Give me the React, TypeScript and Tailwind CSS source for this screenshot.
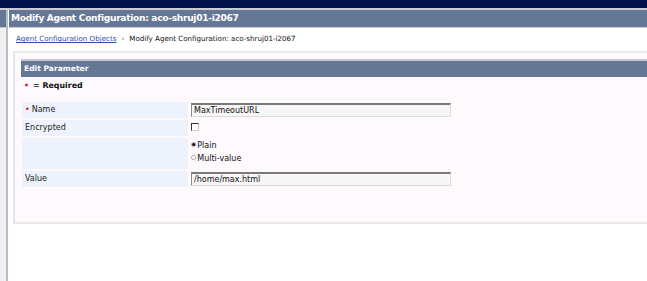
import React from "react";

const font = { fontFamily: '"DejaVu Sans", Verdana, sans-serif' };

function Row({ label, required, children, tall }: { label?: string; required?: boolean; children: React.ReactNode; tall?: boolean }) {
  return (
    <div className={`flex gap-[2px] ${tall ? "h-[31px]" : "h-[16px]"}`}>
      <div className="w-[166px] bg-[#eef2fc] flex items-center pl-[3px] text-[8px] text-[#222]">
        {required && <span className="text-[#e01010] mr-[2px] text-[8px]">•</span>}
        {label}
      </div>
      <div className="flex-1 pl-[1px]">{children}</div>
    </div>
  );
}

function TextInput({ value }: { value: string }) {
  return (
    <div className="mt-[1px] w-[260px] h-[14px] bg-[#f7f7f7] border-t-2 border-l border-t-[#7a7a7a] border-l-[#8a8a8a] border-r border-b border-r-[#dcdcd8] border-b-[#dcdcd8] text-[8px] leading-[11px] pl-[2px] text-[#111]">
      {value}
    </div>
  );
}

export default function App() {
  return (
    <div className="w-[647px] h-[281px] bg-white overflow-hidden relative" style={font}>
      <div className="h-[8px] bg-[#00134a]" />
      <div className="h-[2px] bg-[#c9ccd6]" />
      <div className="flex h-[271px]">
        <div className="w-[6px] flex flex-col bg-[#f1f1f3]">
          <div className="h-[17px] bg-[#647896]" />
          <div className="h-[1px] bg-[#c0c4cc]" />
        </div>
        <div className="w-[2px] bg-[#b8bcc4]" />
        <div className="w-[1px] bg-white" />
        <div className="flex-1 flex flex-col">
          <div className="h-[17px] bg-[#647896] text-white font-bold text-[9.1px] leading-[17px] pl-[2px] tracking-[-0.3px]">
            Modify Agent Configuration: aco-shruj01-i2067
          </div>
          <div className="h-[1px] bg-[#c8ccd6]" />
          <div className="h-[23px] flex items-center pl-[7px] text-[7.1px] text-[#111]">
            <span className="text-[#2a4fa0] underline">Agent Configuration Objects</span>
            <span className="mx-[5px] text-[#666]">›</span>
            <span>Modify Agent Configuration: aco-shruj01-i2067</span>
          </div>
          <div className="ml-[4px] h-[173px] bg-[#fdf9fd] border-t-2 border-t-[#ebebeb] border-l-2 border-l-[#e6e6e6] border-b-2 border-b-[#e8e8e8] pt-[6px] pl-[6px]">
            <div className="h-[18px] bg-[#647896] border-t-2 border-t-[#c4cad4] text-white font-bold text-[7.6px] leading-[16px] pl-[3px]">
              Edit Parameter
            </div>
            <div className="h-[17px] flex items-center pl-[3px] text-[7.9px] font-bold text-[#111]">
              <span className="text-[#e01010] mr-[4px]">•</span>= Required
            </div>
            <div className="h-[8px]" />
            <div className="flex flex-col gap-[2px] pl-[1px]">
              <Row label="Name" required>
                <TextInput value="MaxTimeoutURL" />
              </Row>
              <Row label="Encrypted">
                <div className="mt-[3px] w-[8px] h-[8px] bg-white border-t border-l border-[#333] border-r border-b border-r-[#ccc] border-b-[#ccc]" />
              </Row>
              <Row tall>
                <div className="flex flex-col text-[8px] text-[#111] pt-[1px] leading-[13px]">
                  <div className="flex items-start">
                    <span className="text-[6px] leading-[10px] mr-[1px]">◉</span>Plain
                  </div>
                  <div className="flex items-start">
                    <span className="text-[6px] leading-[10px] mr-[1px]">○</span>Multi-value
                  </div>
                </div>
              </Row>
              <Row label="Value">
                <TextInput value="/home/max.html" />
              </Row>
            </div>
          </div>
        </div>
      </div>
    </div>
  );
}
